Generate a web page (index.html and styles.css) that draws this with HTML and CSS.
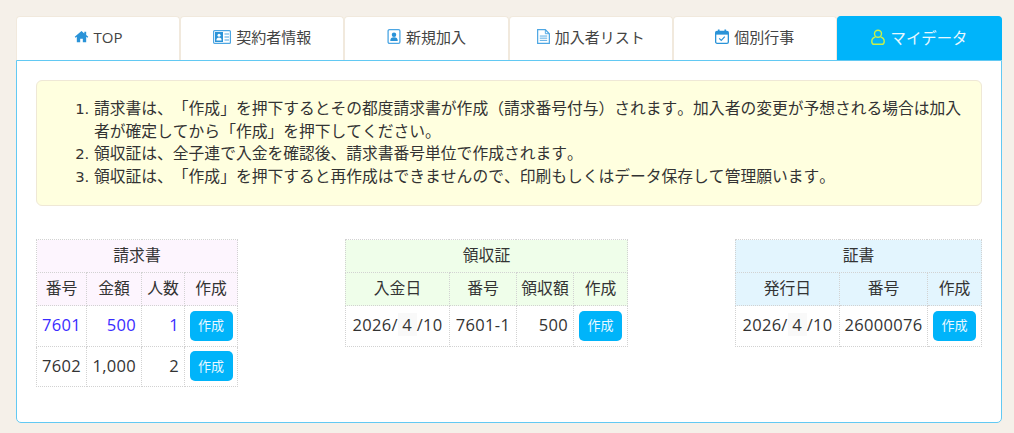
FILE: index.html
```html
<!DOCTYPE html>
<html lang="ja">
<head>
<meta charset="utf-8">
<title>マイデータ</title>
<link rel="stylesheet" href="styles.css">
</head>
<body>
<div class="page">
  <nav class="tabs">
    <a class="tab"><svg class="ico" viewBox="0 0 16 16" width="15" height="15"><path fill="#2a93d8" d="M8 2 .8 8.200l.9 1L3 8.200V14h3.600v-3.600h2.800V14H13V8.200l1.300 1 .9-1L13 6.400V2.800h-2v1.900z"/></svg><span class="latin">TOP</span></a>
    <a class="tab"><svg class="ico" viewBox="0 0 18 14" width="18" height="14"><rect x=".6" y=".6" width="16.800" height="12.800" rx="1" fill="#fff" stroke="#4da6e3" stroke-width="1.200"/><rect x="2" y="2" width="8" height="10" fill="#2a93d8"/><circle cx="6" cy="5.200" r="1.500" fill="#fff"/><path fill="#fff" d="M3.400 10.500c0-2 1-2.900 2.600-2.900s2.600.9 2.600 2.900z"/><path stroke="#4da6e3" d="M11.500 4H16M11.500 7H16M11.500 10H16"/></svg><span>契約者情報</span></a>
    <a class="tab"><svg class="ico" viewBox="0 0 14 16" width="14" height="15"><rect x=".7" y=".7" width="12.600" height="14.600" rx="1.500" fill="#fff" stroke="#4da6e3" stroke-width="1.400"/><circle cx="7" cy="6" r="2.400" fill="#2a93d8"/><path fill="#2a93d8" d="M3 12.800c0-3 1.500-4 4-4s4 1 4 4z"/></svg><span>新規加入</span></a>
    <a class="tab"><svg class="ico" viewBox="0 0 14 16" width="13" height="15"><path fill="none" stroke="#4da6e3" stroke-width="1.300" d="M.7.700h8.300l4.300 4.300v10.300H.7z"/><path fill="none" stroke="#4da6e3" d="M9 1v4h4M3 7.500h8M3 9.800h8M3 12.200h8"/></svg><span>加入者リスト</span></a>
    <a class="tab"><svg class="ico" viewBox="0 0 15 16" width="14" height="15"><rect x=".7" y="2.500" width="13.600" height="12.800" rx="1.500" fill="#fff" stroke="#2a93d8" stroke-width="1.400"/><path fill="#2a93d8" d="M1 3h13v3H1z"/><path stroke="#2a93d8" stroke-width="1.800" d="M4 .5v3M11 .5v3"/><path fill="none" stroke="#2a93d8" stroke-width="1.300" d="M4.500 10l2.200 2.200 3.800-4"/></svg><span>個別行事</span></a>
    <a class="tab tab-active"><svg class="ico" viewBox="0 0 14 16" width="14" height="16"><circle cx="7" cy="4.700" r="3.500" fill="none" stroke="#c8f04a" stroke-width="1.400"/><path fill="none" stroke="#c8f04a" stroke-width="1.400" d="M4.400 8C2 8.500.8 10 .8 12.400c0 1.800 1 2.900 2.500 2.900h7.400c1.500 0 2.500-1.100 2.500-2.900C13.200 10 12 8.500 9.600 8"/></svg><span>マイデータ</span></a>
  </nav>
  <main class="panel">
    <section class="notice">
      <ol class="notes">
        <li>請求書は、「作成」を押下するとその都度請求書が作成（請求番号付与）されます。加入者の変更が予想される場合は加入者が確定してから「作成」を押下してください。</li>
        <li>領収証は、全子連で入金を確認後、請求書番号単位で作成されます。</li>
        <li>領収証は、「作成」を押下すると再作成はできませんので、印刷もしくはデータ保存して管理願います。</li>
      </ol>
    </section>
    <section class="tables">
      <table class="data pink t1">
        <colgroup><col class="w50"><col class="w55"><col class="w43"><col class="w53"></colgroup>
        <thead>
          <tr><th colspan="4">請求書</th></tr>
          <tr><th>番号</th><th>金額</th><th>人数</th><th>作成</th></tr>
        </thead>
        <tbody>
          <tr class="link tall"><td class="c">7601</td><td class="r">500</td><td class="r">1</td><td class="c"><button class="btn">作成</button></td></tr>
          <tr class="tall"><td class="c">7602</td><td class="r">1,000</td><td class="r">2</td><td class="c"><button class="btn">作成</button></td></tr>
        </tbody>
      </table>
      <table class="data green t2">
        <colgroup><col class="w104"><col class="w67"><col class="w57"><col class="w54"></colgroup>
        <thead>
          <tr><th colspan="4">領収証</th></tr>
          <tr><th>入金日</th><th>番号</th><th>領収額</th><th>作成</th></tr>
        </thead>
        <tbody>
          <tr class="tall"><td class="c">2026/<span class="fld"> 4 </span>/10</td><td class="c">7601-1</td><td class="r">500</td><td class="c"><button class="btn">作成</button></td></tr>
        </tbody>
      </table>
      <table class="data blue t3">
        <colgroup><col class="w104"><col class="w88"><col class="w54"></colgroup>
        <thead>
          <tr><th colspan="3">証書</th></tr>
          <tr><th>発行日</th><th>番号</th><th>作成</th></tr>
        </thead>
        <tbody>
          <tr class="tall"><td class="c">2026/<span class="fld"> 4 </span>/10</td><td class="c">26000076</td><td class="c"><button class="btn">作成</button></td></tr>
        </tbody>
      </table>
    </section>
  </main>
</div>
</body>
</html>
```
FILE: styles.css
```css
* { box-sizing: border-box; }
html, body { margin: 0; height: 100%; }
body {
  background: #f5f0e9;
  color: #333;
  font-family: "Noto Sans CJK JP", sans-serif;
  font-size: 15.780px;
  text-spacing-trim: space-all;
  font-kerning: none;
  overflow: hidden;
}
.page { padding: 16px 12px 0 16px; }
.tabs { display: flex; height: 44px; align-items: flex-end; }
.tab {
  flex: none;
  width: 164.200px;
  height: 44px;
  padding-bottom: 4px;
  display: flex;
  align-items: center;
  justify-content: center;
  gap: 5px;
  background: #fff;
  border: 1px solid #f1e9dd;
  border-bottom: 0;
  border-radius: 4px 4px 0 0;
  color: #444;
  font-size: 15px;
}
.latin { font-family: "Open Sans", sans-serif; font-size: 15px; }
.tab-active {
  flex: 1;
  background: #00b4fa;
  border-color: #00b4fa;
  color: #e8f8ff;
  font-size: 15.400px;
}
.ico { flex: none; }
.panel {
  height: 363px;
  background: #fff;
  border: 1px solid #62c9f3;
  border-radius: 0 0 5px 5px;
  padding: 19px 19px 0;
}
.notice {
  height: 126px;
  background: #ffffdf;
  border: 1px solid #efe8d6;
  border-radius: 6px;
  padding: 16px 16px 0 0;
}
.notes { margin: 0; padding-left: 57px; line-height: 22.600px; }
.notes li::marker { font-family: "DejaVu Sans", sans-serif; font-size: 14.800px; }
.tables {
  display: flex;
  justify-content: space-between;
  align-items: flex-start;
  margin-top: 33px;
}
.data {
  border-collapse: collapse;
  table-layout: fixed;
  color: #333;
}
.t1 { width: 201px; }
.t2 { width: 282px; }
.t3 { width: 246px; }
.data th, .data td { border: 1px dotted #d2d2d2; padding: 0; height: 33px; }
.data th { font-weight: 400; font-size: 15.800px; text-align: center; padding-bottom: 3px; }
.data td {
  font-family: "Open Sans", "Noto Sans CJK JP", sans-serif;
  font-size: 16.500px;
  letter-spacing: .3px;
  padding-bottom: 2px;
}
.tall td { height: 40.500px; }
.pink th { background: #fdf5fe; }
.green th { background: #effeea; }
.blue th { background: #e3f5fe; }
.link td { color: #3a2cff; }
.c { text-align: center; }
.r { text-align: right; padding-right: 5px !important; }
.w43 { width: 43px; }
.w50 { width: 50px; }
.w53 { width: 53px; }
.w54 { width: 54px; }
.w55 { width: 55px; }
.w57 { width: 57px; }
.w67 { width: 67px; }
.w88 { width: 88px; }
.w104 { width: 104px; }
.fld { background: #f9f9f9; white-space: pre; }
.btn {
  display: inline-block;
  width: 43px;
  height: 30px;
  margin-top: 2px;
  padding: 0 0 2px;
  border: 0;
  border-radius: 5px;
  background: #00b4fa;
  color: #e8f8ff;
  font-family: "Noto Sans CJK JP", sans-serif;
  font-size: 13px;
  letter-spacing: 0;
  vertical-align: middle;
}
```
